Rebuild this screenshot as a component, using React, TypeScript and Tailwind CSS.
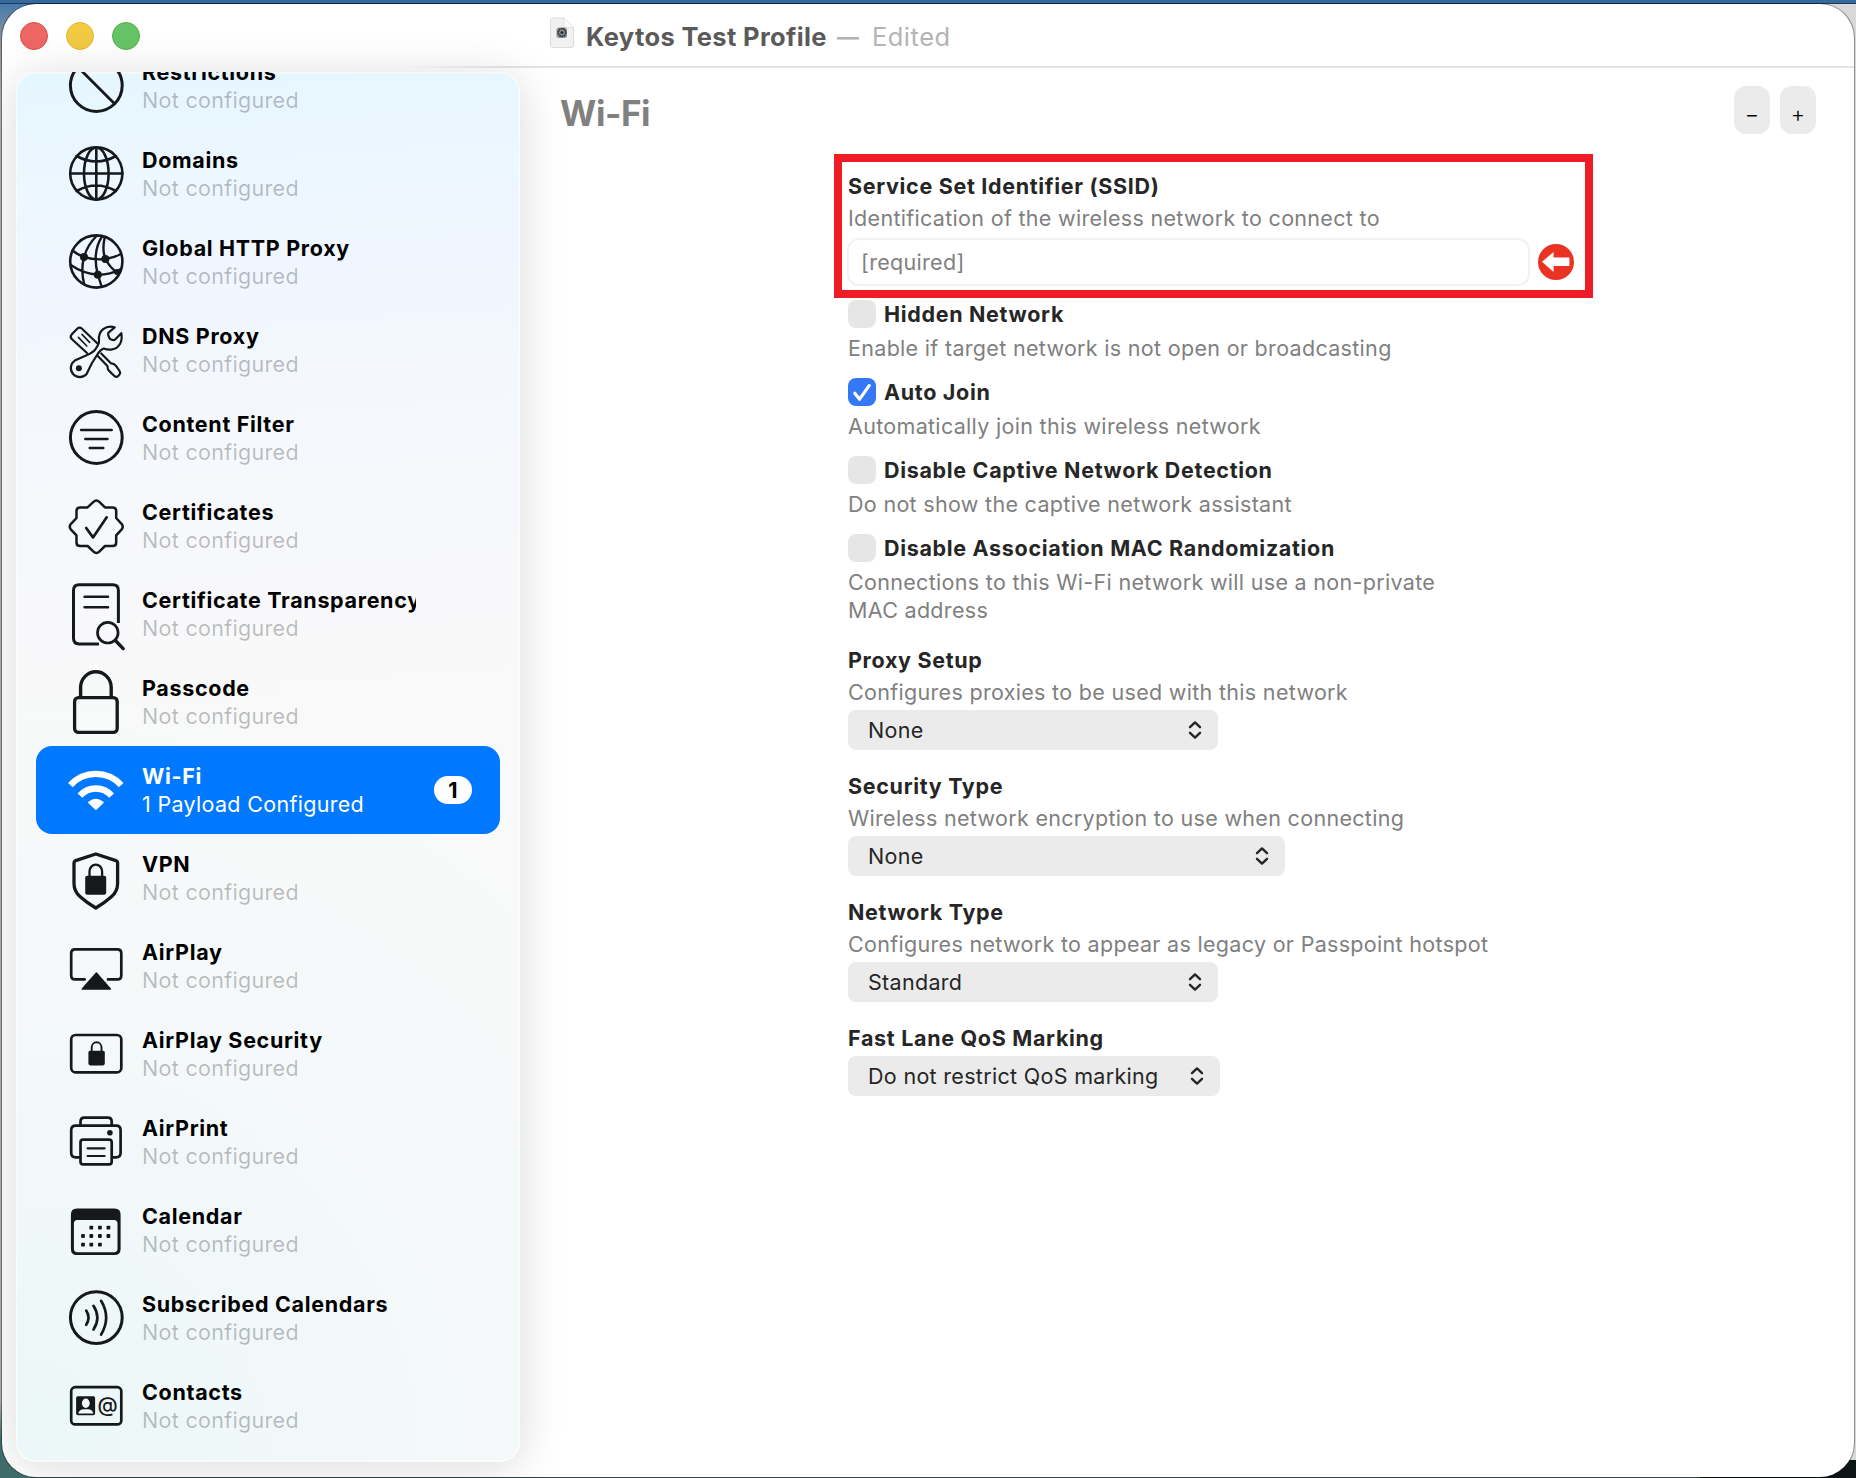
import type { ReactNode } from "react";

const LABEL = "text-[21.5px] leading-7 font-bold tracking-[0.68px]";
const BODY = "text-[21.5px] leading-7 tracking-[0.31px]";

function Glyph({ children }: { children: ReactNode }) {
  return (
    <svg
      className="h-[88px] w-[60px] shrink-0 overflow-visible"
      viewBox="0 0 60 88"
      fill="none"
      stroke="currentColor"
      strokeLinecap="round"
      strokeLinejoin="round"
    >
      {children}
    </svg>
  );
}

const RestrictionsIcon = () => (
  <Glyph>
    <circle cx="30.3" cy="43.5" r="25.9" strokeWidth="3" />
    <path d="M12 25.2 48.6 61.8" strokeWidth="2.8" />
  </Glyph>
);

const GlobeIcon = () => (
  <Glyph>
    <g strokeWidth="2.6">
      <circle cx="30.3" cy="43.5" r="26.1" />
      <ellipse cx="30.3" cy="43.5" rx="12.3" ry="26" />
      <path d="M30.3 17.5v52M4.3 43.5h52M10.6 26Q30.3 37 50 26M10.6 61Q30.3 50 50 61" />
    </g>
  </Glyph>
);

const ProxyIcon = () => (
  <Glyph>
    <circle cx="30.3" cy="43.5" r="26.1" strokeWidth="2.6" />
    <g strokeWidth="2.4">
      <path d="M30.5 18Q21.5 27 18 39Q14.5 53 18.3 66.5" />
      <path d="M6.5 32.5Q12 37 18 39Q28.5 42.2 39.4 41Q48 39.8 55 36" />
      <path d="M36 18.5Q26 34 31.8 56.7L35.6 68.5" />
      <path d="M38.8 19Q35.8 32 39.4 41Q44 49.5 50.4 54" />
      <path d="M4.8 47Q17 55.5 31.8 56.7Q44 56.8 55 51" />
    </g>
    <g fill="currentColor" stroke="none">
      <circle cx="18" cy="39" r="4" />
      <circle cx="39.4" cy="41" r="4" />
      <circle cx="31.8" cy="56.7" r="4" />
      <circle cx="51" cy="54" r="3" />
    </g>
  </Glyph>
);

const ToolsIcon = () => (
  <Glyph>
    <g strokeWidth="2.2">
      <path d="M21 47 6 33.2Q3.6 31 5.6 28.6L11.2 22.8Q13.6 20.6 16 22.8L32 38" />
      <path d="M12.4 31.4 20.8 40M16 28.4 23.6 36.4" strokeWidth="1.6" />
      <path d="M31.8 50 41.4 60Q41.4 63.6 43.6 65.4L48.6 70.2Q50.6 71.8 52.4 69.8L53.6 68.4Q54.8 66.8 53.6 65L50 59.8Q48 57.2 44.9 57.3L35.2 47.5" />
      <path d="M48.7 21.3C40 18.5 32 25 33 34Q33.3 37.5 32 39.2L29.6 43Q28 46 20 49.5L8.8 54.6A9 9 0 1 0 20.6 68Q23 63 26 57L32 47.5Q35 43.2 37.5 42.5Q41 43.8 45 43.6C53 43 57 35.5 55.3 27.2L49.4 33.2Q48.2 34.4 46.8 34L44.6 33.2Q43.6 32.8 43.2 31.6L42.2 28.8Q41.8 27.4 42.8 26.4Z" />
    </g>
    <circle cx="12.9" cy="62.3" r="3" fill="currentColor" stroke="none" />
  </Glyph>
);

const FilterIcon = () => (
  <Glyph>
    <circle cx="30.3" cy="43.5" r="25.9" strokeWidth="3" />
    <path d="M15.2 36h30.4M19.4 45h22M23.8 54h13.4" strokeWidth="2.7" />
  </Glyph>
);

const CertificateIcon = () => (
  <Glyph>
    <path
      strokeWidth="2.5"
      d="M21.5 25.4 27.5 19.9Q30.4 17.2 33.3 19.9L39 25.4H46.5Q50.2 25.4 50.2 29V36L55.5 41.8Q58 44.7 55.5 47.6L50.2 53.4V60.4Q50.2 64 46.5 64H39L33.3 69.6Q30.4 72.3 27.5 69.6L21.7 64H14.2Q10.5 64 10.5 60.4V53.4L5 47.6Q2.5 44.7 5 41.8L10.5 36V29Q10.5 25.4 14.2 25.4Z"
    />
    <path d="M20.2 46 27 55.4 40.7 35.3" strokeWidth="2.7" />
  </Glyph>
);

const TransparencyIcon = () => (
  <Glyph>
    <path
      strokeLinecap="butt"
      strokeWidth="3"
      d="M52.4 53V20.4Q52.4 14.8 46.8 14.8H13.1Q7.5 14.8 7.5 20.4V68.3Q7.5 73.9 13.1 73.9H33"
    />
    <path d="M18.6 26.7h23.4M18.6 37.3h23.4" strokeWidth="2.6" />
    <circle cx="41.8" cy="62.7" r="10.3" strokeWidth="2.7" />
    <path d="M49.6 70.8 57.2 78.6" strokeWidth="3.4" />
  </Glyph>
);

const PasscodeIcon = () => (
  <Glyph>
    <rect x="8.6" y="39.6" width="42.6" height="34.8" rx="4" strokeWidth="3.3" />
    <path d="M14.6 39V29.6A15.3 15.9 0 0 1 45.2 29.6V39" strokeWidth="3.4" />
  </Glyph>
);

const WifiIcon = () => (
  <Glyph>
    <path d="M4.4 39.2A34.2 34.2 0 0 1 55.2 39.2" strokeWidth="6.4" strokeLinecap="butt" />
    <path d="M14 49.6A21 21 0 0 1 45.6 49.6" strokeWidth="6.4" strokeLinecap="butt" />
    <path
      d="M22.9 56.4Q29.9 50.6 36.9 56.4L30.5 62.8Q29.9 63.4 29.3 62.8Z"
      fill="currentColor"
      strokeWidth="1.6"
    />
  </Glyph>
);

const VpnIcon = () => (
  <Glyph>
    <path
      strokeWidth="3.3"
      d="M29.8 20 50 26.6Q51.6 27.2 51.6 28.8V49.5Q51.6 57.4 45.4 62.8Q39 68.6 29.8 74Q20.6 68.6 14.2 62.8Q8 57.4 8 49.5V28.8Q8 27.2 9.6 26.6Z"
    />
    <rect x="19.2" y="41.8" width="21" height="19" rx="2" fill="currentColor" stroke="none" />
    <path d="M23.5 42V37.2A6.3 6.5 0 0 1 36.1 37.2V42" strokeWidth="2.3" />
  </Glyph>
);

const AirPlayIcon = () => (
  <Glyph>
    <path
      strokeWidth="2.7"
      d="M18.6 57.4H9.2Q5.2 57.4 5.2 53.4V31.3Q5.2 27.3 9.2 27.3H51.3Q55.3 27.3 55.3 31.3V53.4Q55.3 57.4 51.3 57.4H42"
    />
    <path d="M30.4 51 44.4 67H16.2Z" fill="currentColor" strokeWidth="1.4" />
  </Glyph>
);

const AirPlaySecurityIcon = () => (
  <Glyph>
    <rect x="5.2" y="25" width="50.1" height="37.4" rx="4.5" strokeWidth="2.7" />
    <rect x="22.4" y="40.8" width="16.4" height="14.6" rx="1.8" fill="currentColor" stroke="none" />
    <path d="M25.7 41V37.4A4.9 5.1 0 0 1 35.5 37.4V41" strokeWidth="1.9" />
  </Glyph>
);

const PrinterIcon = () => (
  <Glyph>
    <g strokeWidth="2.7">
      <path d="M14.5 27V23.5Q14.5 19.6 18.4 19.6H41.8Q45.7 19.6 45.7 23.5V27" />
      <path d="M13.4 59.4H9.8Q5.2 59.4 5.2 54.8V32.2Q5.2 27.6 9.8 27.6H50Q54.6 27.6 54.6 32.2V54.8Q54.6 59.4 50 59.4H46.6" />
      <rect x="14.5" y="41.6" width="31.2" height="24.8" rx="2.6" />
      <path d="M21.6 50.3h17M21.6 58h17" strokeWidth="2.2" />
    </g>
    <circle cx="43.9" cy="34.7" r="2.8" fill="currentColor" stroke="none" />
  </Glyph>
);

const CALENDAR_DOTS = [
  [25.3, 41.7], [33.9, 41.7], [42.4, 41.7],
  [17, 50], [25.3, 50], [33.9, 50], [42.4, 50],
  [17, 58.6], [25.3, 58.6], [33.9, 58.6],
];

const CalendarIcon = () => (
  <Glyph>
    <g fill="currentColor" stroke="none">
      <path
        fillRule="evenodd"
        d="M10.9 22.4H48.5Q54.6 22.4 54.6 28.5V63Q54.6 69 48.5 69H10.9Q4.9 69 4.9 63V28.5Q4.9 22.4 10.9 22.4ZM11.4 34Q7.9 34 7.9 37.5V62.8Q7.9 66.2 11.4 66.2H48Q51.5 66.2 51.5 62.8V37.5Q51.5 34 48 34Z"
      />
      {CALENDAR_DOTS.map(([x, y]) => (
        <rect key={`${x}-${y}`} x={x - 1.9} y={y - 1.9} width="3.8" height="3.8" rx="0.8" />
      ))}
    </g>
  </Glyph>
);

const SubscribedIcon = () => (
  <Glyph>
    <circle cx="30.3" cy="43.6" r="25.9" strokeWidth="3" />
    <path
      strokeWidth="2.7"
      d="M20.2 36.6Q24.8 43.7 20.2 50.8M27.5 31.8Q35.2 43.7 27.5 55.6M35.1 26.8Q45.2 43.7 35.1 60.6"
    />
  </Glyph>
);

const ContactsIcon = () => (
  <Glyph>
    <rect x="5.2" y="25.2" width="50.1" height="37.2" rx="4" strokeWidth="2.7" />
    <g stroke="none">
      <rect x="10.1" y="34.2" width="19" height="19" rx="1.8" fill="currentColor" />
      <ellipse cx="19.8" cy="41.2" rx="3.9" ry="4.7" fill="#f4f9f9" />
      <path d="M12.2 51.6Q13.2 47.4 17.6 47.2H22Q26.4 47.4 27.4 51.6Z" fill="#f4f9f9" />
      <text x="41.6" y="50" textAnchor="middle" fontSize="20.5" fontWeight="500" fill="currentColor" fontFamily="Inter, sans-serif">
        @
      </text>
    </g>
  </Glyph>
);

type Payload = { name: string; icon: () => ReactNode; count?: number };

const PAYLOADS: Payload[] = [
  { name: "Restrictions", icon: RestrictionsIcon },
  { name: "Domains", icon: GlobeIcon },
  { name: "Global HTTP Proxy", icon: ProxyIcon },
  { name: "DNS Proxy", icon: ToolsIcon },
  { name: "Content Filter", icon: FilterIcon },
  { name: "Certificates", icon: CertificateIcon },
  { name: "Certificate Transparency", icon: TransparencyIcon },
  { name: "Passcode", icon: PasscodeIcon },
  { name: "Wi-Fi", icon: WifiIcon, count: 1 },
  { name: "VPN", icon: VpnIcon },
  { name: "AirPlay", icon: AirPlayIcon },
  { name: "AirPlay Security", icon: AirPlaySecurityIcon },
  { name: "AirPrint", icon: PrinterIcon },
  { name: "Calendar", icon: CalendarIcon },
  { name: "Subscribed Calendars", icon: SubscribedIcon },
  { name: "Contacts", icon: ContactsIcon },
];

function PayloadRow({ name, icon: Icon, count }: Payload) {
  const selected = count !== undefined;
  return (
    <li
      className={`flex h-[88px] items-center rounded-2xl pr-7 pl-[30px] ${
        selected ? "bg-[#0078ff] text-white" : "text-[#16191b]"
      }`}
    >
      <Icon />
      <div className="ml-4 w-[274px] overflow-hidden whitespace-nowrap">
        <div className={`${LABEL} ${selected ? "text-white" : "text-black"}`}>{name}</div>
        <div className={`${BODY} ${selected ? "text-white" : "text-black/25"}`}>
          {selected ? `${count} Payload Configured` : "Not configured"}
        </div>
      </div>
      {selected && (
        <span className="ml-auto flex h-7 w-[38px] items-center justify-center rounded-full bg-white text-[21.5px] font-bold text-black">
          {count}
        </span>
      )}
    </li>
  );
}

function Sidebar() {
  return (
    <aside className="mt-1 ml-3.5 h-[1390px] w-[504px] shrink-0 overflow-hidden rounded-[20px] bg-[radial-gradient(circle_at_0%_100%,#ebf7f8_0%,rgba(240,248,250,0.6)_28%,transparent_56%),linear-gradient(176deg,#e5f6ff_0%,#ecf7ff_8%,#f0f6ff_15%,#f4f8fd_24%,#f7f8fb_34%,#f9f9f9_46%,#f9f9f9_100%)] shadow-[inset_0_0_0_1.5px_rgba(255,255,255,0.6),0_5px_46px_rgba(0,0,0,0.15)]">
      <ul className="-mt-[30px] px-5">
        {PAYLOADS.map((p) => (
          <PayloadRow key={p.name} {...p} />
        ))}
      </ul>
    </aside>
  );
}

function TitleBar() {
  return (
    <header className="flex h-16 shrink-0 flex-col">
      <div className="flex h-[62px] items-center pl-[18px]">
        <div className="flex gap-[18px] pt-0.5">
          <span className="size-7 rounded-full border border-[#e24b48] bg-[#ec6765]" />
          <span className="size-7 rounded-full border border-[#e5b62e] bg-[#f2c945]" />
          <span className="size-7 rounded-full border border-[#4db04a] bg-[#67c466]" />
        </div>
        <svg className="mr-3 -mt-1 ml-[410px] h-8 w-6" viewBox="0 0 24 32">
          <path d="M3 1H14L23.500 10.500V28Q23.500 30.500 21 30.500H3Q.5 30.500 .5 28V3.500Q.5 1 3 1Z" fill="#f1f1f1" stroke="#dcdcdc" />
          <path d="M14 1V8.500Q14 10.500 16 10.500H23.500Z" fill="#fdfdfd" stroke="#dedede" strokeWidth=".8" />
          <rect x="6.500" y="10.500" width="10.500" height="10.500" rx="2.500" fill="#8d9296" />
          <circle cx="12" cy="15.500" r="3.800" fill="none" stroke="#2c3034" strokeWidth="1.700" strokeDasharray="1.800 .5" />
          <circle cx="12" cy="15.500" r="1.600" fill="#2c3034" />
        </svg>
        <div className="flex items-center pt-[3px] text-[25.5px] leading-8">
          <h1 className="font-bold tracking-[0.36px] text-[#5a5a5a]">Keytos Test Profile</h1>
          <span className="ml-2 w-[26px] text-center text-[22px] font-bold text-[#b2b2b2]">—</span>
          <span className="ml-[11px] tracking-[0.5px] text-[#b4b4b4]">Edited</span>
        </div>
      </div>
      <div className="h-0.5 bg-[linear-gradient(90deg,transparent_400px,#e5e5e5_510px)]" />
    </header>
  );
}

function CheckboxField({ label, hint, checked }: { label: string; hint: string; checked?: boolean }) {
  return (
    <div className="mb-4">
      <div className="flex items-center">
        <span
          className={`flex size-7 items-center justify-center rounded-lg ${checked ? "bg-[#3478f6]" : "bg-[#e6e6e6]"}`}
        >
          {checked && (
            <svg className="size-7" viewBox="0 0 28 28" fill="none" stroke="#fff" strokeWidth="3.2" strokeLinecap="round" strokeLinejoin="round">
              <path d="M6.800 15.200 11.600 21.200 21.200 7.600" />
            </svg>
          )}
        </span>
        <span className={`ml-2 text-[#262626] ${LABEL}`}>{label}</span>
      </div>
      <p className={`mt-1.5 w-[620px] text-[#808080] ${BODY}`}>{hint}</p>
    </div>
  );
}

function SelectField({ label, hint, value, width }: { label: string; hint?: string; value: string; width: string }) {
  return (
    <div className="mb-[22px] flex flex-col gap-1">
      <div className={`text-[#262626] ${LABEL}`}>{label}</div>
      {hint && <p className={`whitespace-nowrap text-[#808080] ${BODY}`}>{hint}</p>}
      <div className={`flex h-10 items-center justify-between rounded-lg bg-[#ebebeb] pr-4 pl-5 text-[#262626] ${width}`}>
        <span className={BODY}>{value}</span>
        <svg className="h-5 w-3.5" viewBox="0 0 14 20" fill="none" stroke="currentColor" strokeWidth="2.4" strokeLinecap="round" strokeLinejoin="round">
          <path d="M2 7.200 7 2.400 12 7.200M2 12.800 7 17.600 12 12.800" />
        </svg>
      </div>
    </div>
  );
}

function SsidField() {
  return (
    <div className="-ml-3.5 h-36 w-[759px] border-8 border-[#ee1c24] pt-2.5 pl-[5px]">
      <div className={`pl-px text-[#262626] ${LABEL}`}>Service Set Identifier (SSID)</div>
      <p className={`mt-1 pl-px text-[#808080] ${BODY}`}>Identification of the wireless network to connect to</p>
      <div className="mt-1.5 flex items-center">
        <div className={`flex h-12 w-[683px] items-center rounded-xl border-2 border-[#f2f2f2] pl-3 text-[#808080] ${BODY}`}>
          [required]
        </div>
        <svg className="ml-2 size-9" viewBox="0 0 36 36">
          <circle cx="18" cy="18" r="18" fill="#ea3323" />
          <path d="M4 17.800 15.600 8V13.600H31.400V22H15.600V28Z" fill="#fff" />
        </svg>
      </div>
    </div>
  );
}

function RoundButton({ children }: { children: string }) {
  return (
    <button className="flex h-12 w-9 items-center justify-center rounded-xl bg-[#ebebeb] pt-2 text-[22px] leading-none font-light text-black">
      {children}
    </button>
  );
}

function WifiPane() {
  return (
    <main className="flex flex-1 flex-col">
      <div className="flex h-[86px] items-start justify-between pr-[38px] pl-10">
        <h2 className="mt-[24px] text-[35px] leading-[42px] font-bold tracking-[-0.4px] text-[#808080]">Wi-Fi</h2>
        <div className="mt-[18px] flex gap-2.5">
          <RoundButton>−</RoundButton>
          <RoundButton>+</RoundButton>
        </div>
      </div>
      <div className="ml-[328px]">
        <SsidField />
        <div className="mt-0.5">
          <CheckboxField label="Hidden Network" hint="Enable if target network is not open or broadcasting" />
          <CheckboxField label="Auto Join" hint="Automatically join this wireless network" checked />
          <CheckboxField label="Disable Captive Network Detection" hint="Do not show the captive network assistant" />
          <CheckboxField
            label="Disable Association MAC Randomization"
            hint="Connections to this Wi-Fi network will use a non-private MAC address"
          />
        </div>
        <div className="pt-1.5">
          <SelectField label="Proxy Setup" hint="Configures proxies to be used with this network" value="None" width="w-[370px]" />
          <SelectField label="Security Type" hint="Wireless network encryption to use when connecting" value="None" width="w-[437px]" />
          <SelectField label="Network Type" hint="Configures network to appear as legacy or Passpoint hotspot" value="Standard" width="w-[370px]" />
          <SelectField label="Fast Lane QoS Marking" value="Do not restrict QoS marking" width="w-[372px]" />
        </div>
      </div>
    </main>
  );
}

export default function App() {
  return (
    <div className="h-[1478px] w-[1856px] overflow-hidden bg-[linear-gradient(#36689c_0px,#36689c_3px,#1d3a5c_3px,#1d3a5c_4px,transparent_4px),linear-gradient(90deg,transparent_1700px,#0d1416_1700px),linear-gradient(90deg,transparent_1800px,#d9d9d9_1800px),linear-gradient(#3f78ae_0px,#8a9299_40px,#a8a8a8_100px,#a8a8a8_1400px,#3f6b6b_1440px)] bg-[length:100%_100%,100%_18px,100%_1460px,100%_100%] bg-[position:0_0,0_100%,0_0,0_0] bg-no-repeat pt-1 pr-0.5 pb-px pl-0.5 font-['Inter',sans-serif]">
      <div className="flex h-[1473px] flex-col overflow-hidden rounded-[34px] bg-white shadow-[0_0_0_1px_rgba(0,0,0,0.35)]">
        <TitleBar />
        <div className="flex">
          <Sidebar />
          <WifiPane />
        </div>
      </div>
    </div>
  );
}
